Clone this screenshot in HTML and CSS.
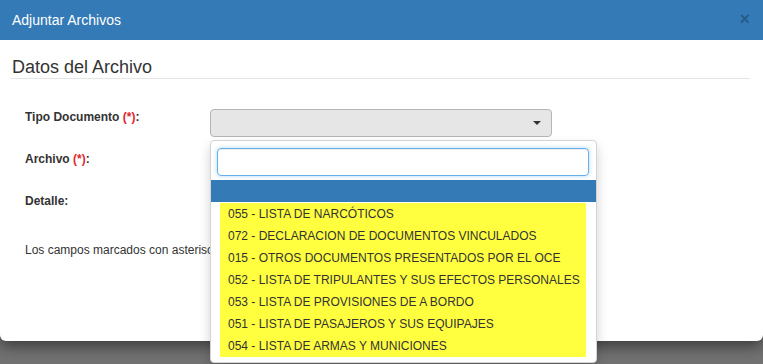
FILE: index.html
```html
<!DOCTYPE html>
<html>
<head>
<meta charset="utf-8">
<title>Adjuntar Archivos</title>
<link rel="stylesheet" href="styles.css">
</head>
<body>

<div class="page">

<!-- Modal -->
<div class="modal">

  <div class="modal-header">
    <span class="modal-title">Adjuntar Archivos</span>
    <span class="close">&times;</span>
  </div>

  <div class="modal-body">
    <div class="legend">Datos del Archivo</div>

    <div class="form-row">
      <label class="form-label">Tipo Documento <span class="req">(*)</span>:</label>
      <div class="select-wrap">
        <div class="select-box"><span class="caret"></span></div>

        <!-- open dropdown -->
        <div class="dropdown">
          <div class="search-box"></div>
          <div class="option-active"></div>
          <ul class="option-list">
            <li>055 - LISTA DE NARCÓTICOS</li>
            <li>072 - DECLARACION DE DOCUMENTOS VINCULADOS</li>
            <li>015 - OTROS DOCUMENTOS PRESENTADOS POR EL OCE</li>
            <li>052 - LISTA DE TRIPULANTES Y SUS EFECTOS PERSONALES</li>
            <li>053 - LISTA DE PROVISIONES DE A BORDO</li>
            <li>051 - LISTA DE PASAJEROS Y SUS EQUIPAJES</li>
            <li>054 - LISTA DE ARMAS Y MUNICIONES</li>
          </ul>
        </div>
      </div>
    </div>

    <div class="form-row">
      <label class="form-label">Archivo <span class="req">(*)</span>:</label>
    </div>

    <div class="form-row">
      <label class="form-label">Detalle:</label>
    </div>

    <p class="note">Los campos marcados con asterisco (*) son obligatorios.</p>
  </div>

</div>

</div>

</body>
</html>
```

FILE: styles.css
```css
body {
  margin: 0;
  font-family: "Liberation Sans", Arial, sans-serif;
  font-size: 12px;
  color: #333;
}

.page {
  height: 364px;
  overflow: hidden;
  background-color: #727272; /* overlay grey */
}

/* Modal */
.modal {
  height: 341px;
  background-color: #fff;
  border-radius: 0 0 6px 6px;
  box-shadow: 0 5px 15px rgba(0,0,0,0.5);
}

.modal-header {
  height: 40px;
  padding: 0 13px 0 12px;
  display: flex;
  align-items: center;
  justify-content: space-between;
  background-color: #337ab7; /* Blue */
}

.modal-title {
  color: #fff;
  font-size: 14px;
}

.close {
  color: rgba(0,0,0,0.25);
  font-size: 18px;
  font-weight: bold;
  line-height: 1;
  padding-bottom: 2px;
}

.modal-body {
  padding: 17px 13px 0 10px;
}

.legend {
  font-size: 18px;
  line-height: 20px;
  padding: 0 0 1px 2px;
  border-bottom: 1px solid #e5e5e5;
  margin-bottom: 28px;
}

/* Form rows */
.form-row {
  display: flex;
  height: 42px;
  padding-left: 15px;
}

.form-label {
  width: 185px;
  font-weight: bold;
  line-height: 20px;
}

.req {
  color: #e4252b;
}

.select-wrap {
  position: relative;
  margin-top: 2px;
}

.select-box {
  width: 340px;
  height: 26px;
  background-color: #e6e6e6;
  border: 1px solid #b5b5b5;
  border-radius: 4px;
  display: flex;
  align-items: center;
  justify-content: flex-end;
}

.caret {
  width: 0;
  height: 0;
  margin-right: 10px;
  border-top: 4px solid #333;
  border-left: 4px solid transparent;
  border-right: 4px solid transparent;
}

/* Dropdown (lies over the form) */
.dropdown {
  position: absolute;
  top: 31px;
  left: 0;
  z-index: 2;
  width: 385px;
  padding: 7px 0 5px 0;
  background-color: #fff;
  border: 1px solid #d4d4d4;
  border-radius: 4px;
  box-shadow: 0 6px 12px rgba(0,0,0,0.18);
}

.search-box {
  width: 370px;
  height: 26px;
  margin-left: 6px;
  border: 1px solid #66afe9;
  border-radius: 4px;
  box-shadow: inset 0 1px 1px rgba(0,0,0,0.075), 0 0 4px rgba(102,175,233,0.5);
}

.option-active {
  height: 22px;
  margin-top: 4px;
  background-color: #337ab7;
}

.option-list {
  list-style-type: none;
  margin: 1px 10px 0 9px;
  padding: 0;
}

.option-list li {
  height: 22px;
  line-height: 22px;
  padding-left: 8px;
  background-color: #ffff40; /* Yellow */
  white-space: nowrap;
}

/* the open dropdown covers the end of this line */
.note {
  width: 185px;
  margin: 7px 0 0 15px;
  line-height: 20px;
  white-space: nowrap;
  overflow: hidden;
}
```
